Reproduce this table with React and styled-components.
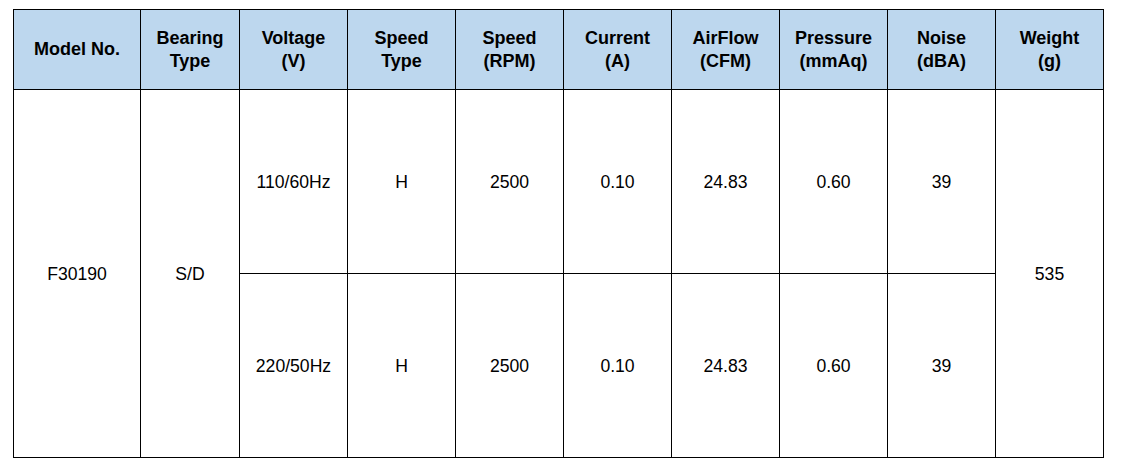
import styled, { createGlobalStyle } from 'styled-components';

const GlobalStyle = createGlobalStyle`
  body {
    margin: 0;
    padding: 9px 0 0 13px;
    background: #ffffff;
    font-family: "Liberation Sans", Arial, sans-serif;
  }
`;

const SpecTable = styled.table`
  border-collapse: collapse;
  table-layout: fixed;
  width: 1091px;
  color: #000000;
  font-size: 17.6px;
`;

const HeadCell = styled.th`
  height: 79px;
  padding: 0 4px;
  border: 1px solid #000000;
  background: #bdd7ee;
  font-size: 18px;
  font-weight: bold;
  line-height: 23px;
  text-align: center;
  vertical-align: middle;
`;

const Cell = styled.td`
  height: 182px;
  padding: 1px 4px 0;
  border: 1px solid #000000;
  text-align: center;
  vertical-align: middle;
  line-height: 23px;
`;

const columns = [
  { label: ['Model No.'], width: 127 },
  { label: ['Bearing', 'Type'], width: 99 },
  { label: ['Voltage', '(V)'], width: 108 },
  { label: ['Speed', 'Type'], width: 108 },
  { label: ['Speed', '(RPM)'], width: 108 },
  { label: ['Current', '(A)'], width: 108 },
  { label: ['AirFlow', '(CFM)'], width: 108 },
  { label: ['Pressure', '(mmAq)'], width: 108 },
  { label: ['Noise', '(dBA)'], width: 108 },
  { label: ['Weight', '(g)'], width: 108 },
];

const rows = [
  { voltage: '110/60Hz', speedType: 'H', rpm: '2500', current: '0.10', airflow: '24.83', pressure: '0.60', noise: '39' },
  { voltage: '220/50Hz', speedType: 'H', rpm: '2500', current: '0.10', airflow: '24.83', pressure: '0.60', noise: '39' },
];

const App = () => {
  return (
    <>
      <GlobalStyle />
      <SpecTable>
        <colgroup>
          {columns.map((col, i) => (
            <col key={i} style={{ width: col.width }} />
          ))}
        </colgroup>
        <thead>
          <tr>
            {columns.map((col, i) => (
              <HeadCell key={i}>
                {col.label.map((line, j) => (
                  <div key={j}>{line}</div>
                ))}
              </HeadCell>
            ))}
          </tr>
        </thead>
        <tbody>
          {rows.map((row, i) => (
            <tr key={i}>
              {i === 0 && <Cell rowSpan={2}>F30190</Cell>}
              {i === 0 && <Cell rowSpan={2}>S/D</Cell>}
              <Cell>{row.voltage}</Cell>
              <Cell>{row.speedType}</Cell>
              <Cell>{row.rpm}</Cell>
              <Cell>{row.current}</Cell>
              <Cell>{row.airflow}</Cell>
              <Cell>{row.pressure}</Cell>
              <Cell>{row.noise}</Cell>
              {i === 0 && <Cell rowSpan={2}>535</Cell>}
            </tr>
          ))}
        </tbody>
      </SpecTable>
    </>
  );
};

export default App;
